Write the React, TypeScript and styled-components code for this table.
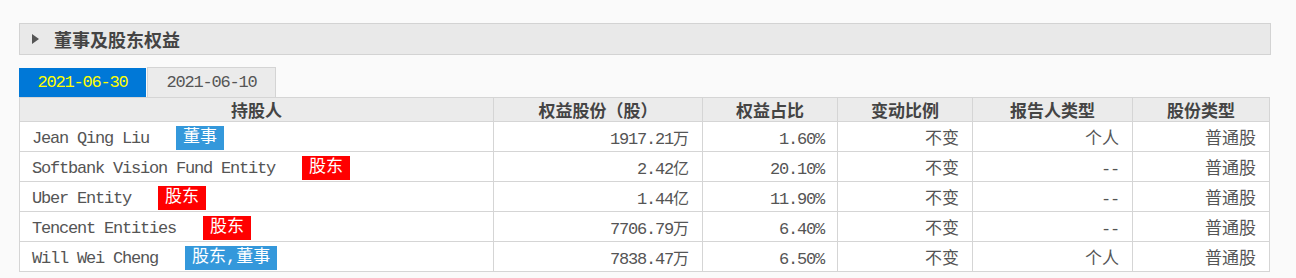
import React from "react";
import styled, { createGlobalStyle } from "styled-components";

const GlobalStyle = createGlobalStyle`
  body {
    margin: 0;
    background: #fafafa;
  }
`;

const Page = styled.div`
  width: 1252px;
  padding: 23px 0 0 19px;
  font-family: "Noto Sans CJK SC", sans-serif;
  color: #555;
`;

const SectionBar = styled.div`
  display: flex;
  align-items: center;
  height: 30px;
  padding-left: 12px;
  background: #e9e9e9;
  border: 1px solid #d3d3d3;
`;

const Caret = styled.span`
  width: 0;
  height: 0;
  border-top: 5px solid transparent;
  border-bottom: 5px solid transparent;
  border-left: 7px solid #555;
  margin-right: 15px;
`;

const Title = styled.span`
  font-size: 18px;
  font-weight: bold;
  color: #444;
  line-height: 1;
`;

const Tabs = styled.div`
  display: flex;
  align-items: flex-end;
  gap: 1px;
  margin-top: 12px;
`;

const Tab = styled.div<{ active?: boolean }>`
  box-sizing: border-box;
  width: ${(p) => (p.active ? "127px" : "129px")};
  height: ${(p) => (p.active ? "29px" : "30px")};
  line-height: 29px;
  text-align: center;
  font-family: "Liberation Mono", "Noto Sans CJK SC", monospace;
  font-size: 17px;
  letter-spacing: -1.2px;
  background: ${(p) => (p.active ? "#0078d7" : "#ebebeb")};
  color: ${(p) => (p.active ? "#ffff00" : "#555")};
  border: ${(p) => (p.active ? "none" : "1px solid #d4d4d4")};
  border-bottom: none;
`;

const Table = styled.table`
  width: 1250px;
  border-collapse: collapse;
  table-layout: fixed;
  background: #fff;
`;

const Th = styled.th`
  height: 23px;
  padding: 0;
  background: #ebebeb;
  border: 1px solid #d5d5d5;
  font-size: 17px;
  font-weight: bold;
  color: #444;
  text-align: center;
  line-height: 23px;
`;

const Td = styled.td<{ align?: "left" | "right" }>`
  height: 29px;
  padding: 0 13px 0 12px;
  border: 1px solid #d5d5d5;
  text-align: ${(p) => p.align || "right"};
  font-size: 17px;
  color: #555;
  white-space: nowrap;
`;

const Mono = styled.span`
  font-family: "Liberation Mono", "Noto Sans CJK SC", monospace;
  font-size: 17px;
  letter-spacing: -1.2px;
`;

const Unit = styled.span`
  font-family: "Noto Sans CJK SC", sans-serif;
  font-size: 16px;
`;

const Badge = styled.span<{ kind: "holder" | "director" }>`
  display: inline-block;
  margin-left: 27px;
  padding: 0 7px;
  height: 24px;
  line-height: 24px;
  vertical-align: middle;
  font-family: "Liberation Mono", "Noto Sans CJK SC", monospace;
  font-size: 17px;
  color: #fff;
  background: ${(p) => (p.kind === "holder" ? "#ff0000" : "#3498db")};
`;

type Row = {
  name: string;
  tag: string;
  kind: "holder" | "director";
  shares: string;
  unit: string;
  ratio: string;
  reporter: string;
};

const rows: Row[] = [
  { name: "Jean Qing Liu", tag: "董事", kind: "director", shares: "1917.21", unit: "万", ratio: "1.60%", reporter: "个人" },
  { name: "Softbank Vision Fund Entity", tag: "股东", kind: "holder", shares: "2.42", unit: "亿", ratio: "20.10%", reporter: "--" },
  { name: "Uber Entity", tag: "股东", kind: "holder", shares: "1.44", unit: "亿", ratio: "11.90%", reporter: "--" },
  { name: "Tencent Entities", tag: "股东", kind: "holder", shares: "7706.79", unit: "万", ratio: "6.40%", reporter: "--" },
  { name: "Will Wei Cheng", tag: "股东,董事", kind: "director", shares: "7838.47", unit: "万", ratio: "6.50%", reporter: "个人" },
];

const widths = [474, 209, 135, 135, 160, 137];
const headers = ["持股人", "权益股份（股）", "权益占比", "变动比例", "报告人类型", "股份类型"];

export default function App() {
  return (
    <>
      <GlobalStyle />
      <Page>
        <SectionBar>
          <Caret />
          <Title>董事及股东权益</Title>
        </SectionBar>
        <Tabs>
          <Tab active>2021-06-30</Tab>
          <Tab>2021-06-10</Tab>
        </Tabs>
        <Table>
          <colgroup>
            {widths.map((w, i) => (
              <col key={i} style={{ width: w }} />
            ))}
          </colgroup>
          <thead>
            <tr>
              {headers.map((h) => (
                <Th key={h}>{h}</Th>
              ))}
            </tr>
          </thead>
          <tbody>
            {rows.map((r) => (
              <tr key={r.name}>
                <Td align="left">
                  <Mono>{r.name}</Mono>
                  <Badge kind={r.kind}>{r.tag}</Badge>
                </Td>
                <Td>
                  <Mono>{r.shares}</Mono>
                  <Unit>{r.unit}</Unit>
                </Td>
                <Td>
                  <Mono>{r.ratio}</Mono>
                </Td>
                <Td>不变</Td>
                <Td>
                  {r.reporter === "--" ? <Mono>--</Mono> : r.reporter}
                </Td>
                <Td>普通股</Td>
              </tr>
            ))}
          </tbody>
        </Table>
      </Page>
    </>
  );
}
